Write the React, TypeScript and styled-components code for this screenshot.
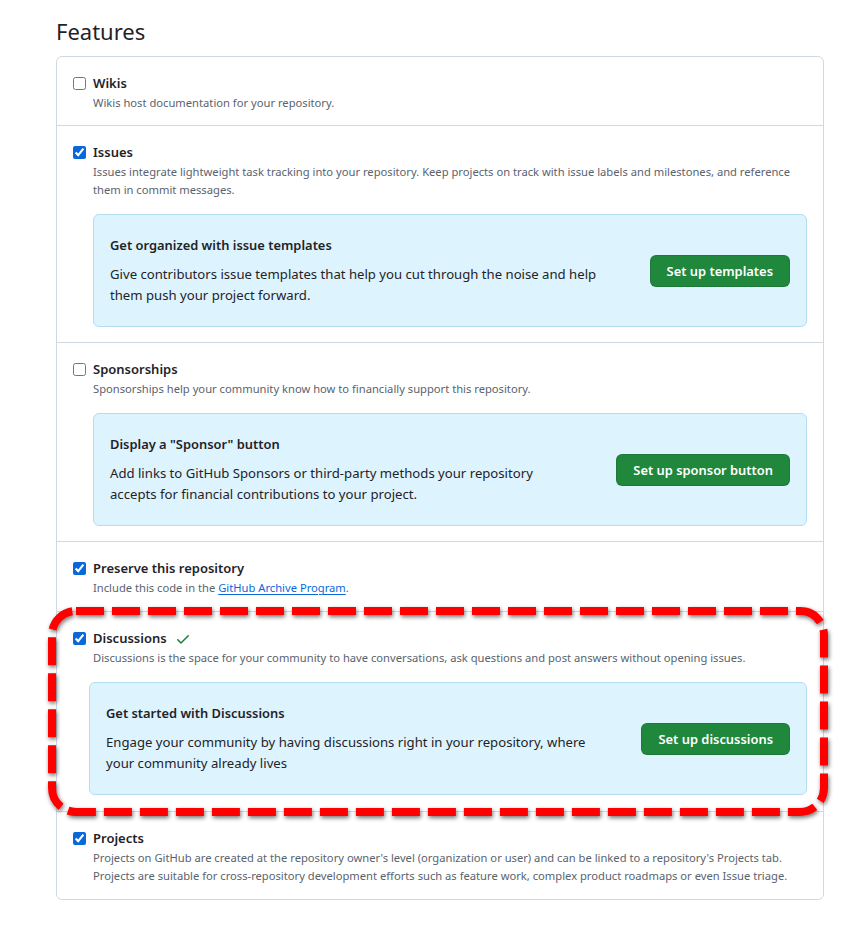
import React from "react";
import styled, { createGlobalStyle } from "styled-components";

const Global = createGlobalStyle`
  html, body { margin: 0; padding: 0; background: #ffffff; }
  body {
    font-family: "Noto Sans", "Segoe UI", "Liberation Sans", sans-serif;
    color: #1f2328;
    -webkit-font-smoothing: antialiased;
  }
`;

const Page = styled.div`
  position: relative;
  width: 866px;
  box-sizing: border-box;
  padding: 16px 42px 32px 56px;
`;

const Heading = styled.h2`
  margin: 0 0 9px 0;
  font-size: 22px;
  line-height: 31px;
  font-weight: 400;
  color: #1f2328;
`;

const Box = styled.div`
  border: 1px solid #d1d9e0;
  border-radius: 6px;
  background: #ffffff;
`;

const Row = styled.div`
  display: grid;
  grid-template-columns: 20px 1fr;
  padding: 16px 16px 14px 16px;
  border-top: 1px solid #d1d9e0;
  &:first-child {
    border-top: none;
    padding-bottom: 13px;
  }
`;

const Check = styled.input.attrs({ type: "checkbox" })`
  width: 13px;
  height: 13px;
  margin: 4px 0 0 0;
  accent-color: #0969da;
`;

const Body = styled.div`
  display: flex;
  flex-direction: column;
  min-width: 0;
`;

const Title = styled.div`
  display: flex;
  align-items: center;
  gap: 8px;
  font-size: 13px;
  line-height: 21px;
  font-weight: 600;
  color: #1f2328;
`;

const Desc = styled.p`
  margin: 0;
  font-size: 11.2px;
  line-height: 18px;
  color: #59636e;
  white-space: nowrap;
`;

const Link = styled.a`
  color: #0969da;
  text-decoration: underline;
  text-underline-offset: 2px;
`;

const Callout = styled.div<{ $shift?: number; $after?: number }>`
  display: flex;
  align-items: center;
  gap: 24px;
  margin: 15px 0 ${(p) => p.$after ?? 1}px ${(p) => -(p.$shift ?? 0)}px;
  padding: 20px 16px 20px 16px;
  background: #ddf4ff;
  border: 1px solid #b4dcf3;
  border-radius: 6px;
`;

const CalloutText = styled.div`
  flex: 1;
  display: flex;
  flex-direction: column;
  gap: 8px;
`;

const CalloutTitle = styled.div`
  font-size: 12.9px;
  line-height: 21px;
  font-weight: 600;
  color: #1f2328;
`;

const CalloutDesc = styled.p`
  margin: 0;
  font-size: 13.15px;
  line-height: 21px;
  color: #1f2328;
  white-space: nowrap;
`;

const Button = styled.button`
  flex: none;
  height: 32px;
  padding: 0 16px;
  border: 1px solid rgba(31, 35, 40, 0.15);
  border-radius: 6px;
  background: #1f883d;
  color: #ffffff;
  font-family: inherit;
  font-size: 12.9px;
  font-weight: 600;
`;

const Annotation = styled.svg`
  position: absolute;
  left: 40px;
  top: 600px;
  width: 800px;
  height: 225px;
  pointer-events: none;
  overflow: visible;
`;

const CheckMark = () => (
  <svg width="16" height="16" viewBox="0 0 16 16" fill="#1a7f37" aria-hidden>
    <path d="M13.78 4.22a.75.75 0 0 1 0 1.06l-7.25 7.25a.75.75 0 0 1-1.06 0L2.22 9.28a.751.751 0 0 1 .018-1.042.751.751 0 0 1 1.042-.018L6 10.94l6.72-6.72a.75.75 0 0 1 1.06 0Z" />
  </svg>
);

type Feature = {
  title: string;
  checked: boolean;
  desc: React.ReactNode;
  done?: boolean;
  callout?: { title: string; text: React.ReactNode; button: string; shift?: number; after?: number };
};

const features: Feature[] = [
  { title: "Wikis", checked: false, desc: "Wikis host documentation for your repository." },
  {
    title: "Issues",
    checked: true,
    desc: (
      <>
        Issues integrate lightweight task tracking into your repository. Keep projects on track with issue labels and milestones, and reference
        <br />
        them in commit messages.
      </>
    ),
    callout: {
      title: "Get organized with issue templates",
      text: (
        <>
          Give contributors issue templates that help you cut through the noise and help
          <br />
          them push your project forward.
        </>
      ),
      button: "Set up templates",
    },
  },
  {
    title: "Sponsorships",
    checked: false,
    desc: "Sponsorships help your community know how to financially support this repository.",
    callout: {
      title: 'Display a "Sponsor" button',
      text: (
        <>
          Add links to GitHub Sponsors or third-party methods your repository
          <br />
          accepts for financial contributions to your project.
        </>
      ),
      button: "Set up sponsor button",
    },
  },
  {
    title: "Preserve this repository",
    checked: true,
    desc: (
      <>
        Include this code in the <Link href="#">GitHub Archive Program</Link>.
      </>
    ),
  },
  {
    title: "Discussions",
    checked: true,
    done: true,
    desc: "Discussions is the space for your community to have conversations, ask questions and post answers without opening issues.",
    callout: {
      title: "Get started with Discussions",
      text: (
        <>
          Engage your community by having discussions right in your repository, where
          <br />
          your community already lives
        </>
      ),
      button: "Set up discussions",
      shift: 4,
      after: 2,
    },
  },
  {
    title: "Projects",
    checked: true,
    desc: (
      <>
        Projects on GitHub are created at the repository owner's level (organization or user) and can be linked to a repository's Projects tab.
        <br />
        Projects are suitable for cross-repository development efforts such as feature work, complex product roadmaps or even Issue triage.
      </>
    ),
  },
];

export default function App() {
  return (
    <>
      <Global />
      <Page>
        <Heading>Features</Heading>
        <Box>
          {features.map((f) => (
            <Row key={f.title}>
              <Check defaultChecked={f.checked} />
              <Body>
                <Title>
                  {f.title}
                  {f.done && <CheckMark />}
                </Title>
                <Desc>{f.desc}</Desc>
                {f.callout && (
                  <Callout $shift={f.callout.shift} $after={f.callout.after}>
                    <CalloutText>
                      <CalloutTitle>{f.callout.title}</CalloutTitle>
                      <CalloutDesc>{f.callout.text}</CalloutDesc>
                    </CalloutText>
                    <Button>{f.callout.button}</Button>
                  </Callout>
                )}
              </Body>
            </Row>
          ))}
        </Box>
        <Annotation viewBox="0 0 800 225">
          <defs>
            <filter id="sh" x="-5%" y="-20%" width="110%" height="140%">
              <feDropShadow dx="1" dy="2" stdDeviation="2" floodColor="#000" floodOpacity="0.55" />
            </filter>
          </defs>
          <rect
            x="12"
            y="11"
            width="772"
            height="201"
            rx="24"
            ry="24"
            fill="none"
            stroke="#ff0000"
            strokeWidth="8"
            strokeDasharray="28 8"
            filter="url(#sh)"
          />
        </Annotation>
      </Page>
    </>
  );
}
